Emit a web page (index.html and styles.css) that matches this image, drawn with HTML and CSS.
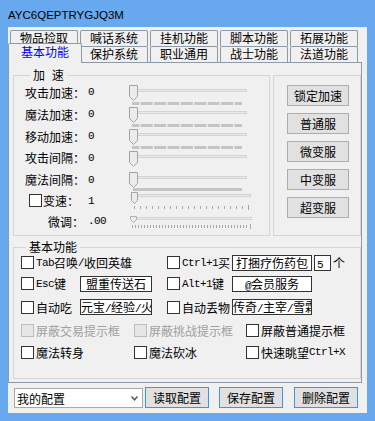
FILE: index.html
```html
<!DOCTYPE html>
<html>
<head>
    <meta charset="UTF-8">
    <title>AYC6QEPTRYGJQ3M</title>
    <link rel="stylesheet" href="styles.css">
</head>
<body>
    <svg class="defs" width="0" height="0">
        <defs>
            <g id="trk">
                <rect x="3.5" y="8.5" width="115" height="2" fill="#e9e9e9" stroke="#d4d4d4"/>
                <path d="M1.5 4.5H9.5V15.5L5.5 19.5L1.5 15.5Z" fill="#ececec" stroke="#a3a3a3"/>
            </g>
            <g id="trk-dash">
                <use href="#trk"/>
                <line x1="4" y1="22.5" x2="114" y2="22.5" stroke="#c4c4c4" stroke-width="3" stroke-dasharray="12 1.4" stroke-dashoffset="4.7"/>
            </g>
        </defs>
    </svg>

    <div class="window">
        <div class="titlebar">AYC6QEPTRYGJQ3M</div>
        <div class="client">
            <div class="tabs">
                <div class="tab-row">
                    <div class="tab">物品捡取</div>
                    <div class="tab">喊话系统</div>
                    <div class="tab">挂机功能</div>
                    <div class="tab">脚本功能</div>
                    <div class="tab">拓展功能</div>
                </div>
                <div class="tab-row lower">
                    <div class="tab active">基本功能</div>
                    <div class="tab">保护系统</div>
                    <div class="tab">职业通用</div>
                    <div class="tab">战士功能</div>
                    <div class="tab">法道功能</div>
                </div>
            </div>

            <div class="panel">
                <div class="top-groups">
                    <fieldset class="group speed">
                        <legend>加 速</legend>
                        <div class="srow"><span>攻击加速：</span><span class="mono">0</span>
                            <svg class="slider" width="124" height="22"><use href="#trk-dash"/></svg></div>
                        <div class="srow"><span>魔法加速：</span><span class="mono">0</span>
                            <svg class="slider" width="124" height="22"><use href="#trk-dash"/></svg></div>
                        <div class="srow"><span>移动加速：</span><span class="mono">0</span>
                            <svg class="slider" width="124" height="22"><use href="#trk-dash"/></svg></div>
                        <div class="srow short"><span>攻击间隔：</span><span class="mono">0</span>
                            <svg class="slider" width="124" height="21"><use href="#trk"/></svg></div>
                        <div class="srow tall"><span>魔法间隔：</span><span class="mono">0</span>
                            <svg class="slider" width="124" height="23">
                                <use href="#trk"/>
                                <line x1="5" y1="21.5" x2="114" y2="21.5" stroke="#c4c4c4" stroke-width="3"/>
                            </svg></div>
                        <div class="srow tiny"><span class="chk-lbl"><span class="box"></span>变速：</span><span class="mono">1</span>
                            <svg class="slider" width="124" height="19">
                                <rect x="9.5" y="3.5" width="113" height="2" fill="#e9e9e9" stroke="#d4d4d4"/>
                                <path d="M3.5 1.5H9.5V9.5L6.5 12.5L3.5 9.5Z" fill="#ececec" stroke="#a3a3a3"/>
                                <line x1="6" y1="16.5" x2="121" y2="16.5" stroke="#a8a8a8" stroke-width="3" stroke-dasharray="1 5"/>
                                <line x1="120.5" y1="14" x2="120.5" y2="19" stroke="#a8a8a8"/>
                            </svg></div>
                        <div class="srow"><span class="indent">微调：</span><span class="mono">.00</span>
                            <svg class="slider" width="124" height="22">
                                <rect x="8.5" y="7.5" width="115" height="2" fill="#e9e9e9" stroke="#d4d4d4"/>
                                <path d="M2.5 6.5H8.5V9.5L5.5 12.5L2.5 9.5Z" fill="#ececec" stroke="#b0b0b0"/>
                                <line x1="4" y1="16.5" x2="121" y2="16.5" stroke="#a8a8a8" stroke-width="3" stroke-dasharray="1 2"/>
                                <line x1="122.5" y1="14" x2="122.5" y2="19" stroke="#a8a8a8"/>
                            </svg></div>
                    </fieldset>

                    <div class="group servers">
                        <button class="btn">锁定加速</button>
                        <button class="btn">普通服</button>
                        <button class="btn">微变服</button>
                        <button class="btn">中变服</button>
                        <button class="btn">超变服</button>
                    </div>
                </div>

                <fieldset class="group basic">
                    <legend>基本功能</legend>
                    <div class="brow r1">
                        <span class="chk w146"><span class="box"></span><span class="mono">Tab</span>召唤<span class="mono">/</span>收回英雄</span>
                        <span class="chk w65"><span class="box"></span><span class="mono">Ctrl+1</span>买</span>
                        <span class="field w80">打捆疗伤药包</span>
                        <span class="field small"><span class="mono">5</span></span>
                        <span class="unit">个</span>
                    </div>
                    <div class="brow r2">
                        <span class="chk w59"><span class="box"></span><span class="mono">Esc</span>键</span>
                        <span class="field w72">盟重传送石</span>
                        <span class="chk w65 col2"><span class="box"></span><span class="mono">Alt+1</span>键</span>
                        <span class="field w80"><span class="mono">@</span>会员服务</span>
                    </div>
                    <div class="brow r3">
                        <span class="chk w59"><span class="box"></span>自动吃</span>
                        <span class="field w72 left">元宝<span class="mono">/</span>经验<span class="mono">/</span>火炬</span>
                        <span class="chk w65 col2"><span class="box"></span>自动丢物</span>
                        <span class="field w80 left">传奇<span class="mono">/</span>主宰<span class="mono">/</span>雪霜</span>
                    </div>
                    <div class="brow r4">
                        <span class="chk w113 off"><span class="box"></span>屏蔽交易提示框</span>
                        <span class="chk w112 off"><span class="box"></span>屏蔽挑战提示框</span>
                        <span class="chk"><span class="box"></span>屏蔽普通提示框</span>
                    </div>
                    <div class="brow r5">
                        <span class="chk w113"><span class="box"></span>魔法转身</span>
                        <span class="chk w112"><span class="box"></span>魔法砍冰</span>
                        <span class="chk"><span class="box"></span>快速眺望<span class="mono">Ctrl+X</span></span>
                    </div>
                </fieldset>
            </div>

            <div class="bottom-bar">
                <div class="combo">
                    <span>我的配置</span>
                    <svg width="7" height="5"><path d="M0.5 0.5L3.5 3.8L6.5 0.5" fill="none" stroke="#555" stroke-width="1.5"/></svg>
                </div>
                <button class="cfg-btn first">读取配置</button>
                <button class="cfg-btn second">保存配置</button>
                <button class="cfg-btn third">删除配置</button>
            </div>
        </div>
    </div>
</body>
</html>
```

FILE: styles.css
```css
* {
    box-sizing: border-box;
}
body {
    margin: 0;
    font-family: "Noto Sans CJK SC", "Noto Sans", sans-serif;
    font-size: 12px;
    color: #000;
}
.defs {
    display: block;
    width: 0;
    height: 0;
}
.mono {
    font-family: "Liberation Mono", monospace;
    font-size: 11px;
    letter-spacing: -0.6px;
}

/* window frame */
.window {
    width: 375px;
    height: 421px;
    background: #68a8ee;
    padding: 0 8px 8px;
}
.titlebar {
    height: 27px;
    padding-top: 3px;
    display: flex;
    align-items: center;
    font-family: "Liberation Sans", Arial, sans-serif;
    font-size: 11.5px;
}
.client {
    height: 386px;
    background: #f0f0f0;
}

/* tabs */
.tabs {
    padding-top: 3px;
}
.tab-row {
    display: flex;
    gap: 2px;
    height: 16px;
    padding-left: 2px;
}
.tab-row.lower {
    padding-left: 0;
}
.tab {
    width: 68px;
    height: 16px;
    border: 1px solid #8e9aa6;
    border-bottom: none;
    border-radius: 2px 2px 0 0;
    background: #f0f0f0;
    text-align: center;
    line-height: 14px;
}
.tab.active {
    position: relative;
    z-index: 1;
    width: 74px;
    height: 20px;
    margin-top: -3px;
    margin-right: -4px;
    padding-top: 2px;
    color: #0000ff;
    line-height: 12px;
}
.panel {
    width: 354px;
    height: 321px;
    border: 1px solid #8e9aa6;
    background: #f0f0f0;
}

/* group boxes */
.group {
    margin: 0;
    padding: 0;
    min-width: 0;
    border: 1px solid #d5d5d5;
}
.group legend {
    margin-left: 5px;
    padding: 0 3px;
    line-height: 12px;
    word-spacing: 4px;
}
.top-groups {
    display: flex;
    align-items: flex-start;
    padding-left: 4px;
}
.speed {
    width: 257px;
    height: 167px;
    margin-top: 6px;
    padding-left: 11px;
}
.servers {
    width: 88px;
    height: 161px;
    margin: 12px 0 0 3px;
    padding: 9px 0 0 13px;
}
.btn {
    display: block;
    width: 62px;
    height: 21px;
    margin-bottom: 7px;
    padding: 0;
    font: inherit;
    color: #000;
    border: 1px solid #adadad;
    background: #e1e1e1;
}

/* speed rows */
.srow {
    display: grid;
    grid-template-columns: 63px 40px 124px;
    align-items: center;
    height: 22px;
}
.srow.short { height: 21px; }
.srow.tall { height: 23px; }
.srow.tiny { height: 19px; }
.srow .slider {
    display: block;
    align-self: start;
    overflow: visible;
}
.chk-lbl {
    display: flex;
    align-items: center;
    padding-left: 4px;
}
.chk-lbl .box {
    margin-right: 1px;
}
.indent {
    padding-left: 23px;
}

/* basic options */
.basic {
    width: 348px;
    height: 138px;
    margin: 5px 0 0 4px;
    padding-left: 7px;
}
.brow {
    display: flex;
    align-items: center;
}
.r1 { height: 19px; }
.r2 { height: 23px; }
.r3 { height: 24px; }
.r4 { height: 22px; }
.r5 { height: 22px; }
.chk {
    display: flex;
    align-items: center;
    flex: none;
    white-space: nowrap;
}
.box {
    width: 13px;
    height: 13px;
    margin-right: 2px;
    flex: none;
    border: 1px solid #333;
    background: #fff;
}
.chk.off {
    color: #a0a0a0;
}
.chk.off .box {
    border-color: #bcbcbc;
    background: #e6e6e6;
}
.w146 { width: 146px; }
.w65 { width: 65px; }
.w59 { width: 59px; }
.w113 { width: 113px; }
.w112 { width: 112px; }
.col2 { margin-left: 15px; }
.field {
    flex: none;
    height: 16px;
    border: 1px solid #333;
    background: #fff;
    text-align: center;
    line-height: 14px;
    overflow: hidden;
    white-space: nowrap;
}
.field.left {
    text-align: left;
}
.w80 { width: 80px; }
.w72 { width: 72px; }
.field.small {
    width: 17px;
    margin-left: 2px;
    padding-left: 2px;
    text-align: left;
}
.unit {
    margin-left: 2px;
}

/* bottom bar */
.bottom-bar {
    display: flex;
    align-items: flex-start;
    height: 21px;
    margin-top: 4px;
}
.combo {
    display: flex;
    align-items: center;
    justify-content: space-between;
    width: 129px;
    height: 20px;
    margin: 1px 0 0 6px;
    padding: 0 4px 0 2px;
    border: 1px solid #a8a8a8;
    background: #fff;
}
.cfg-btn {
    width: 64px;
    height: 21px;
    padding: 0;
    font: inherit;
    color: #000;
    border: 1px solid #3a97e4;
    background: #e1e1e1;
}
.cfg-btn.first { margin-left: 2px; }
.cfg-btn.second { margin-left: 10px; }
.cfg-btn.third { margin-left: 11px; }
```
